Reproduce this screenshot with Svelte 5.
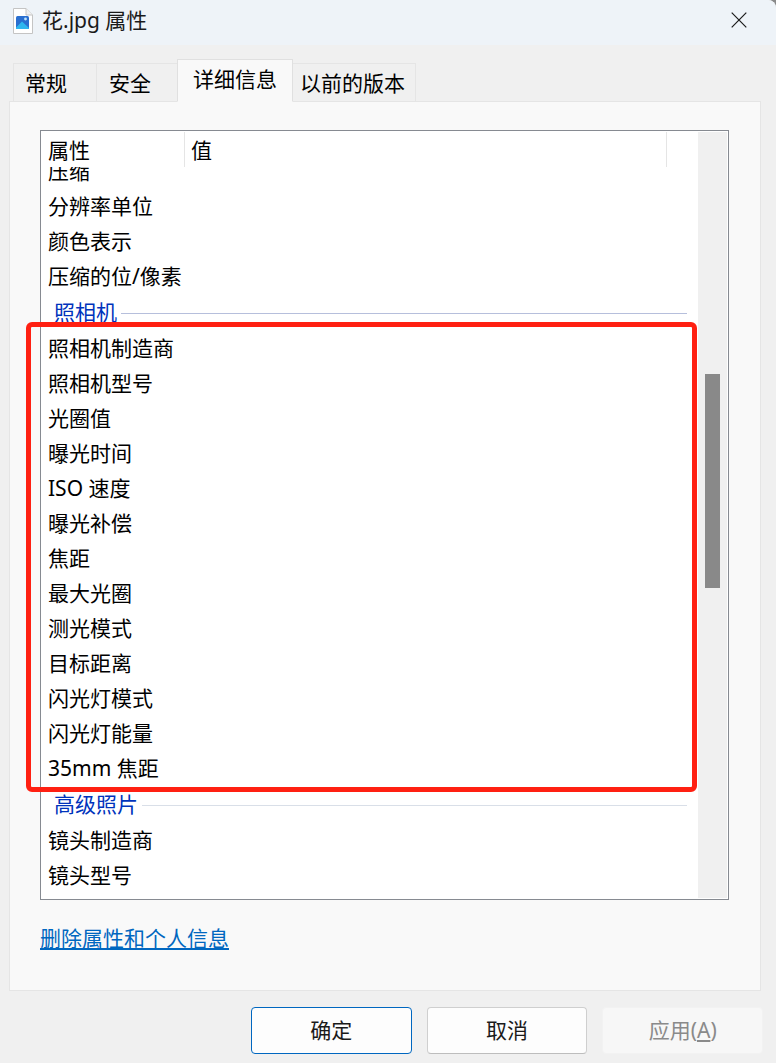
<script>
  const top = ['压缩', '分辨率单位', '颜色表示', '压缩的位/像素'];
  const camera = ['照相机制造商', '照相机型号', '光圈值', '曝光时间', 'ISO 速度', '曝光补偿', '焦距', '最大光圈', '测光模式', '目标距离', '闪光灯模式', '闪光灯能量', '35mm 焦距'];
  const advanced = ['镜头制造商', '镜头型号'];
</script>

<div class="win">
  <header class="title">
    <svg class="file" width="22" height="26" viewBox="0 0 22 26" aria-hidden="true">
      <path d="M1.5 .5H14L20.5 7V25.5H1.5Z" fill="#fff" stroke="#c4c4c4" />
      <path d="M14 .5V7H20.5" fill="#f0f0f0" stroke="#c4c4c4" />
      <rect x="4" y="8" width="13" height="13" rx="1.5" fill="#2a6fd0" />
      <path d="M4 19.5L10 13.5L17 20V21H4Z" fill="#2fb6ee" />
      <circle cx="13.5" cy="11" r="1.4" fill="#bfe3fa" />
    </svg>
    <span>花.jpg 属性</span>
    <svg class="close" width="16" height="16" viewBox="0 0 16 16" aria-hidden="true">
      <path d="M.7 .7L15.3 15.3M15.3 .7L.7 15.3" stroke="#1a1a1a" stroke-width="1.2" fill="none" />
    </svg>
  </header>

  <nav class="tabs">
    <div class="tab t1">常规</div>
    <div class="tab t2">安全</div>
    <div class="tab active">详细信息</div>
    <div class="tab t4">以前的版本</div>
  </nav>

  <section class="panel">
    <div class="list">
      <div class="table">
        <div class="head">
          <div class="col c1">属性</div>
          <div class="col c2">值</div>
          <div class="col c3"></div>
        </div>
        <div class="body">
          <div class="scrolled">
            {#each top as r}<div class="row">{r}</div>{/each}
            <div class="group"><span>照相机</span><i></i></div>
            {#each camera as r}<div class="row">{r}</div>{/each}
            <div class="group"><span>高级照片</span><i class="pale"></i></div>
            {#each advanced as r}<div class="row">{r}</div>{/each}
          </div>
        </div>
      </div>
      <div class="track"><div class="thumb"></div></div>
    </div>
    <a class="link" href="#top">删除属性和个人信息</a>
  </section>

  <footer class="foot">
    <button class="btn primary">确定</button>
    <button class="btn">取消</button>
    <button class="btn off">应用(<u>A</u>)</button>
  </footer>

  <div class="mark"></div>
</div>

<style>
  :global(body) {
    margin: 0;
    background: #8a8a8a;
  }
  .win {
    position: relative;
    width: 776px;
    height: 1063px;
    overflow: hidden;
    background: #f0f0f0;
    border-radius: 0 8px 0 0;
    font-family: "Noto Sans", "Noto Sans CJK SC", sans-serif;
    font-size: 21px;
    color: #000;
  }
  .title {
    height: 45px;
    background: #eef3f8;
    display: flex;
    align-items: center;
    padding: 0 29px 0 12px;
    color: #1a1a1a;
  }
  .file { flex: none; margin-right: 8px; margin-bottom: 3px; }
  .title span { flex: 1; line-height: 40px; margin-bottom: 6px; }
  .close { flex: none; margin-bottom: 5px; }

  .tabs {
    display: flex;
    align-items: flex-end;
    height: 57px;
    padding-left: 13px;
    position: relative;
    z-index: 1;
  }
  .tab {
    box-sizing: border-box;
    height: 39px;
    background: #f0f0f0;
    border: 1px solid #e5e5e5;
    margin-left: -1px;
    display: flex;
    align-items: center;
    padding-bottom: 1px;
  }
  .t1 { width: 84px; margin-left: 0; padding-left: 11px; }
  .t2 { width: 82px; padding-left: 12px; }
  .t4 { width: 124px; padding-left: 7px; }
  .active {
    width: 116px;
    height: 43px;
    background: #f9f9f9;
    border-color: #e0e0e0;
    border-bottom-color: #f9f9f9;
    justify-content: center;
    padding-bottom: 5px;
    position: relative;
  }

  .panel {
    box-sizing: border-box;
    margin: -1px 15px 0 9px;
    height: 890px;
    background: #f9f9f9;
    border: 1px solid #e5e5e5;
    padding: 28px 31px 0 30px;
  }
  .list {
    box-sizing: border-box;
    height: 770px;
    border: 1px solid #868a91;
    background: #fff;
    display: flex;
    padding: 1px 1px 1px 0;
  }
  .table {
    flex: none;
    width: 657px;
    display: flex;
    flex-direction: column;
    min-height: 0;
  }
  .head {
    flex: none;
    height: 35px;
    display: flex;
    background: #fff;
  }
  .col {
    box-sizing: border-box;
    border-right: 1px solid #e5e5e5;
    line-height: 37px;
    padding-left: 7px;
  }
  .c1 { width: 144px; }
  .c2 { width: 482px; padding-left: 6px; }
  .c3 { flex: 1; border-right: 0; }
  .body { flex: 1; overflow: hidden; min-height: 0; }
  .scrolled { margin-top: -13px; }
  .row {
    height: 35px;
    line-height: 35px;
    padding-left: 7px;
    white-space: nowrap;
  }
  .group {
    height: 37px;
    display: flex;
    align-items: center;
    padding: 0 11px 0 13px;
    gap: 4px;
    color: #0033bc;
  }
  .group span { line-height: 37px; }
  .group i { flex: 1; height: 1px; margin-top: 2px; background: #b6bfdc; }
  .group i.pale { background: #d9dfe8; }
  .track {
    flex: 1;
    background: #f0f0f0;
    position: relative;
    display: flex;
    justify-content: center;
    padding-top: 242px;
  }
  .thumb {
    width: 15px;
    height: 214px;
    background: #898989;
  }
  .link {
    display: inline-block;
    margin-top: 20px;
    color: #0067c0;
    text-decoration: underline;
    line-height: 36px;
  }
  .foot {
    display: flex;
    gap: 15px;
    padding: 16px 13px 0 251px;
  }
  .btn {
    box-sizing: border-box;
    width: 161px;
    height: 47px;
    font: inherit;
    color: #1a1a1a;
    background: #fdfdfd;
    border: 1px solid #cfcfcf;
    border-bottom-color: #bdbdbd;
    border-radius: 4px;
    padding: 0 0 4px;
  }
  .primary { border: 1.5px solid #0067c0; }
  .off {
    background: #f7f7f7;
    border-color: #f2f2f2;
    color: #8a8a8a;
  }
  .mark {
    position: absolute;
    left: 26px;
    top: 322px;
    width: 671px;
    height: 470px;
    box-sizing: border-box;
    border: 5px solid #ff2012;
    border-radius: 6px;
    pointer-events: none;
  }
</style>
